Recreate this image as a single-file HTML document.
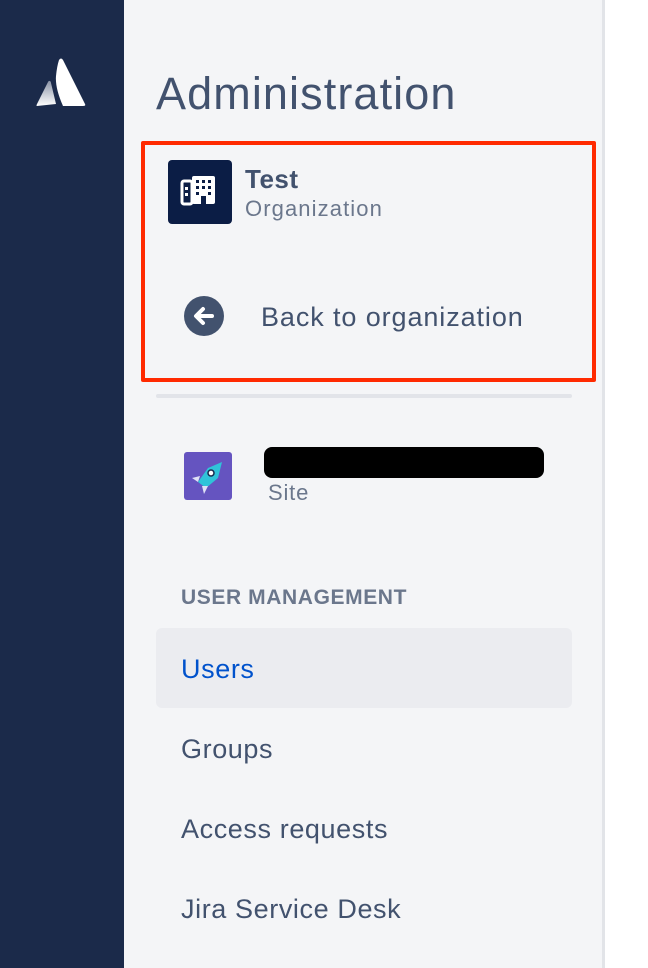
<!DOCTYPE html>
<html><head><meta charset="utf-8"><style>
*{margin:0;padding:0;box-sizing:border-box}
body{width:648px;height:968px;overflow:hidden;background:#fff;font-family:"Liberation Sans",sans-serif;position:relative}
.nav{position:absolute;left:0;top:0;width:124px;height:968px;background:#1b2a4a}
.panel{position:absolute;left:124px;top:0;width:478px;height:968px;background:#f4f5f7}
.edge{position:absolute;left:602px;top:0;width:3px;height:968px;background:#e2e4e8}
.t{position:absolute;white-space:nowrap}
.m{font-size:27px;letter-spacing:0.6px;color:#42526e}
</style></head><body>
<div class="nav"></div>
<div class="panel"></div>
<div class="edge"></div>
<svg style="position:absolute;left:35px;top:58px" width="52" height="50" viewBox="0 0 52 50">
<defs><linearGradient id="g" x1="0" y1="0" x2="0" y2="1"><stop offset="0" stop-color="#8a93a6"/><stop offset="1" stop-color="#fff"/></linearGradient></defs>
<path d="M13 24 C14 22 16 23 16 25 L21 46 L2 48 Q1 48 2 46 Z" fill="url(#g)"/>
<path d="M24 2 Q26 -1 28 2 L50 46 Q51 48 48 48 L28 48 Q20 30 21 18 Q22 8 24 2Z" fill="#fff"/>
</svg>
<div class="t" style="left:156px;top:68px;font-size:45px;letter-spacing:1.1px;color:#42526e">Administration</div>
<div style="position:absolute;left:141px;top:141px;width:455px;height:241px;border:4px solid #ff2a00;border-radius:2px"></div>
<div style="position:absolute;left:168px;top:160px;width:64px;height:64px;background:#0b1d45;border-radius:4px"></div>
<svg style="position:absolute;left:180px;top:172px" width="40" height="40" viewBox="0 0 40 40">
<rect x="2" y="9" width="10" height="23" rx="2" fill="none" stroke="#fff" stroke-width="3"/>
<rect x="12" y="4" width="23" height="28" rx="2" fill="#fff"/>
<g fill="#0b1d45"><rect x="16" y="8" width="3" height="3"/><rect x="22" y="8" width="3" height="3"/><rect x="28" y="8" width="3" height="3"/>
<rect x="16" y="14" width="3" height="3"/><rect x="22" y="14" width="3" height="3"/><rect x="28" y="14" width="3" height="3"/>
<rect x="16" y="20" width="3" height="3"/><rect x="28" y="20" width="3" height="3"/><rect x="21" y="24" width="5" height="8"/></g>
<rect x="5" y="15" width="3" height="3" fill="#fff"/><rect x="5" y="21" width="3" height="3" fill="#fff"/>
</svg>
<div class="t" style="left:245px;top:164px;font-size:26px;letter-spacing:0.5px;font-weight:bold;color:#42526e">Test</div>
<div class="t" style="left:245px;top:196px;font-size:22px;letter-spacing:1.1px;color:#6b778c">Organization</div>
<div style="position:absolute;left:184px;top:296px;width:40px;height:40px;border-radius:50%;background:#42526e"></div>
<svg style="position:absolute;left:184px;top:296px" width="40" height="40" viewBox="0 0 40 40"><path d="M28 20H13M19 13l-7 7 7 7" fill="none" stroke="#fff" stroke-width="4" stroke-linecap="round" stroke-linejoin="round"/></svg>
<div class="t m" style="left:261px;top:302px;letter-spacing:0.9px">Back to organization</div>
<div style="position:absolute;left:156px;top:394px;width:416px;height:4px;background:#e2e4e9;border-radius:2px"></div>
<div style="position:absolute;left:184px;top:452px;width:48px;height:48px;background:#6554c0;border-radius:3px"></div>
<svg style="position:absolute;left:184px;top:452px" width="48" height="48" viewBox="0 0 48 48">
<path d="M38 10 L34 26 L22 36 L14 30 L24 16Z" fill="#2fc3d9"/>
<circle cx="27" cy="21" r="3" fill="#fff" stroke="#172b4d" stroke-width="1.5"/>
<path d="M16 24 L8 26 L14 30Z M24 34 L20 42 L18 34Z" fill="#dfe1f6"/>
</svg>
<div style="position:absolute;left:264px;top:447px;width:280px;height:31px;background:#000;border-radius:8px"></div>
<div class="t" style="left:268px;top:480px;font-size:22px;letter-spacing:0.8px;color:#6b778c">Site</div>
<div class="t" style="left:181px;top:586px;font-size:21px;font-weight:bold;color:#6b778c;letter-spacing:0.6px">USER MANAGEMENT</div>
<div style="position:absolute;left:156px;top:628px;width:416px;height:80px;background:#ebecf0;border-radius:6px"></div>
<div class="t m" style="left:181px;top:654px;color:#0052cc">Users</div>
<div class="t m" style="left:181px;top:734px">Groups</div>
<div class="t m" style="left:181px;top:814px">Access requests</div>
<div class="t m" style="left:181px;top:894px">Jira Service Desk</div>
</body></html>
